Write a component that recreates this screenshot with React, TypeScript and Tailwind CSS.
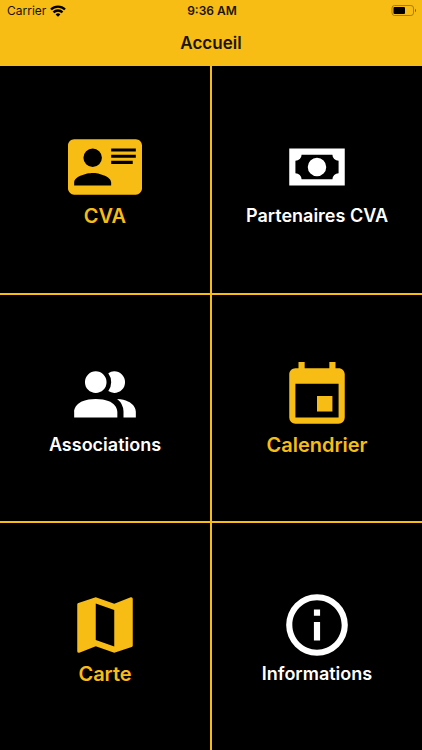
import React from "react";

const cardIcon =
  "M2,3H22C23.05,3 24,3.95 24,5V19C24,20.05 23.05,21 22,21H2C0.95,21 0,20.05 0,19V5C0,3.95 0.95,3 2,3M14,6V7H22V6H14M14,8V9H22V8H14M14,10V11H21V10H14M8,13.91C6,13.91 2,15 2,17V18H14V17C14,15 10,13.91 8,13.91M8,6A3,3 0 0,0 5,9A3,3 0 0,0 8,12A3,3 0 0,0 11,9A3,3 0 0,0 8,6Z";
const cashIcon =
  "M3,6H21V18H3V6M12,9A3,3 0 0,1 15,12A3,3 0 0,1 12,15A3,3 0 0,1 9,12A3,3 0 0,1 12,9M7,8A2,2 0 0,1 5,10V14A2,2 0 0,1 7,16H17A2,2 0 0,1 19,14V10A2,2 0 0,1 17,8H7Z";
const peopleIcon =
  "M16 17V19H2V17S2 13 9 13 16 17 16 17M12.5 7.5A3.5 3.5 0 1 0 9 11A3.5 3.5 0 0 0 12.5 7.5M15.94 13A5.32 5.32 0 0 1 18 17V19H22V17S22 13.37 15.94 13M15 4A3.39 3.39 0 0 0 13.07 4.59A5 5 0 0 1 13.07 10.41A3.39 3.39 0 0 0 15 11A3.5 3.5 0 0 0 15 4Z";
const calendarIcon =
  "M19,19H5V8H19M19,3H18V1H16V3H8V1H6V3H5C3.89,3 3,3.9 3,5V19A2,2 0 0,0 5,21H19A2,2 0 0,0 21,19V5C21,3.89 20.1,3 19,3M17,12H12V17H17V12Z";
const mapIcon =
  "M15,19L9,16.89V5L15,7.11M20.5,3C20.44,3 20.39,3 20.34,3L15,5.1L9,3L3.36,4.9C3.15,4.97 3,5.15 3,5.38V20.5A0.5,0.5 0 0,0 3.5,21C3.55,21 3.61,21 3.66,20.97L9,18.9L15,21L20.64,19.1C20.85,19 21,18.85 21,18.62V3.5A0.5,0.5 0 0,0 20.5,3Z";
const infoIcon =
  "M11,9H13V7H11M12,20C7.59,20 4,16.41 4,12C4,7.59 7.59,4 12,4C16.41,4 20,7.59 20,12C20,16.41 16.41,20 12,20M12,2A10,10 0 0,0 2,12A10,10 0 0,0 12,22A10,10 0 0,0 22,12A10,10 0 0,0 12,2M11,17H13V11H11V17Z";

interface Tile {
  label: string;
  icon: string;
  accent: boolean;
}

const tiles: Tile[] = [
  { label: "CVA", icon: cardIcon, accent: true },
  { label: "Partenaires CVA", icon: cashIcon, accent: false },
  { label: "Associations", icon: peopleIcon, accent: false },
  { label: "Calendrier", icon: calendarIcon, accent: true },
  { label: "Carte", icon: mapIcon, accent: true },
  { label: "Informations", icon: infoIcon, accent: false },
];

function WifiIcon() {
  return (
    <svg viewBox="0 0 16 12" className="h-3 w-4" fill="none" stroke="#000" strokeWidth="2.4" aria-hidden="true">
      <path d="M1 4.5A10 10 0 0 1 15 4.5" />
      <path d="M3.5 7.4A6.3 6.3 0 0 1 12.5 7.4" />
      <path d="M8 11.8L5.6 9.4A3.4 3.4 0 0 1 10.4 9.4Z" fill="#000" stroke="none" />
    </svg>
  );
}

function BatteryIcon() {
  return (
    <svg viewBox="0 0 26 12" className="h-3 w-[26px]" aria-hidden="true">
      <rect x="1" y="0.5" width="21.5" height="10" rx="2.6" fill="none" stroke="#a57d10" strokeWidth="1" />
      <rect x="2.5" y="2" width="11.5" height="7" rx="1" fill="#000" />
      <path d="M24 3.7C25.4 4.3 25.4 6.7 24 7.3Z" fill="#7d5f0c" />
    </svg>
  );
}

function TileButton({ label, icon, accent }: Tile) {
  return (
    <button
      type="button"
      className={`flex flex-col items-center justify-center bg-black font-semibold ${
        accent ? "text-xl text-[#f8bd15]" : "text-lg text-white"
      }`}
    >
      <svg viewBox="0 0 24 24" className="size-[74px]" fill="currentColor" fillRule="evenodd" aria-hidden="true">
        <path d={icon} />
      </svg>
      <span className="leading-6">{label}</span>
    </button>
  );
}

export default function App() {
  return (
    <div className="flex min-h-screen flex-col bg-[#f8bd15] font-['Inter','Liberation_Sans',sans-serif]">
      <header className="text-[#1a1405]">
        <div className="grid h-[22px] grid-cols-3 items-center pr-[5px] pl-[7px] text-xs">
          <div className="flex items-center gap-1">
            <span>Carrier</span>
            <WifiIcon />
          </div>
          <span className="text-center font-semibold">9:36 AM</span>
          <div className="flex justify-end">
            <BatteryIcon />
          </div>
        </div>
        <h1 className="flex h-11 items-center justify-center text-[17px] font-semibold">Accueil</h1>
      </header>
      <main className="grid flex-1 auto-rows-fr grid-cols-2 gap-0.5">
        {tiles.map((tile) => (
          <TileButton key={tile.label} {...tile} />
        ))}
      </main>
    </div>
  );
}
